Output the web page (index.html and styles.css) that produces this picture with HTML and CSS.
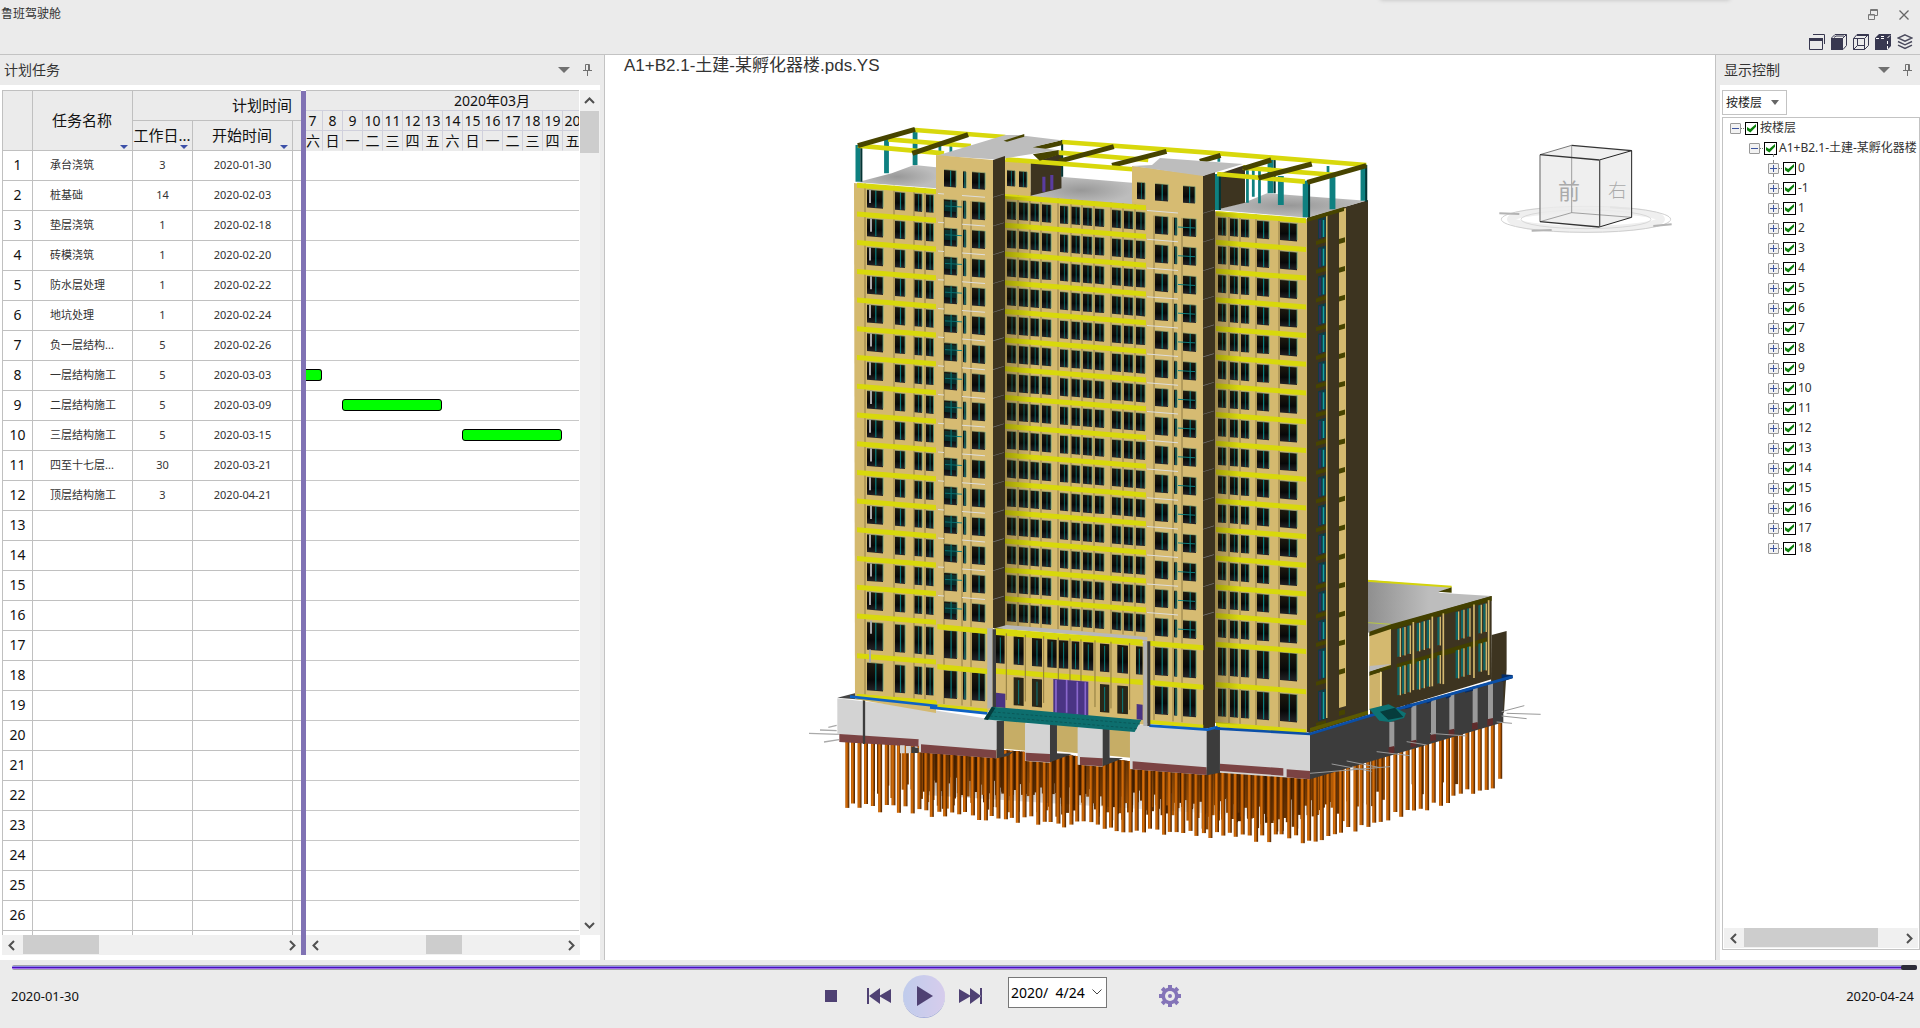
FILE: index.html
```html
<!DOCTYPE html>
<html lang="zh-CN">
<head>
<meta charset="utf-8">
<title>鲁班驾驶舱</title>
<link rel="stylesheet" href="styles.css">
</head>
<body>
<div class="app">
  <header class="topbar">
    <h1 class="app-title">鲁班驾驶舱</h1>
    <div class="topbar-right">
      <div class="window-buttons">
        <button class="icon-btn" aria-label="还原"><svg width="10" height="12" viewBox="0 0 10 12" fill="none" stroke="#777"><path d="M2.500 5V.5h7v6H7M3 1.500h6M.5 5.500h6v5h-6zM1 6h5"/></svg></button>
        <button class="icon-btn" aria-label="关闭"><svg width="10" height="10" viewBox="0 0 10 10" stroke="#666" stroke-width="1.300"><path d="M.5.5l9 9M9.500.5l-9 9"/></svg></button>
      </div>
      <div class="view-buttons">
        <button class="icon-btn" aria-label="窗口"><svg width="16" height="16" viewBox="0 0 16 16" fill="none" stroke="#383850"><path d="M4 .5h11.500V10M.5 4.500h13v11H.5z"/><path d="M0 5.500h14" stroke-width="3"/></svg></button>
        <button class="icon-btn" aria-label="实体"><svg width="16" height="16" viewBox="0 0 16 16" fill="none" stroke="#383850"><path d="M0 4h12v12H0z" fill="#383850" stroke="none"/><path d="M.5 4L4 .5h11.500v11L12 15.500M12 4L15.500.5M3 3.500L5 2h8"/></svg></button>
        <button class="icon-btn" aria-label="线框"><svg width="16" height="16" viewBox="0 0 16 16" fill="none" stroke="#383850"><path d="M.5 4.500h11v11H.5zM.5 4.500L4 .5h11.500v11l-4 4M11.500 4.500l4-4M4 1.500h11M4.500 5v6.500H11M4.500 11.500l-4 4"/></svg></button>
        <button class="icon-btn" aria-label="实体线框"><svg width="16" height="16" viewBox="0 0 16 16"><path d="M0 4L4 0h12v12l-4 4H0z" fill="#383850"/><path d="M1 4.500h3m2 0h3M12.500 7v3m0 2v3M12.500 4L15 1.500M6 2.500h3" fill="none" stroke="#fff"/></svg></button>
        <button class="icon-btn" aria-label="图层"><svg width="16" height="16" viewBox="0 0 16 16" fill="none" stroke="#4a4a5c" stroke-width="1.400"><path d="M8 .8l7 3.200-7 3.200L1 4zM1 7.500l7 3.300 7-3.300M1 11.200l7 3.300 7-3.300"/></svg></button>
      </div>
    </div>
    <div class="drop-shadow"></div>
  </header>

  <main class="workspace">
    <section class="panel">
      <div class="panel-head">
        <h2>计划任务</h2>
        <button class="icon-btn" aria-label="菜单"><svg width="12" height="6" viewBox="0 0 12 6"><path d="M0 0h12L6 6z" fill="#707070"/></svg></button>
        <button class="icon-btn" aria-label="固定"><svg width="9" height="12" viewBox="0 0 9 12" fill="none" stroke="#707070"><path d="M2.500 6V.5h4V6M5.500 1v5M0 6.500h9M4.500 7v5"/></svg></button>
      </div>
      <div class="plan">
        <div class="pane task-pane">
          <div class="pane-view">
            <table class="tasks">
              <colgroup><col class="c-no"><col class="c-name"><col class="c-days"><col class="c-start"><col class="c-end"></colgroup>
              <thead>
                <tr><th rowspan="2"></th><th rowspan="2"><span class="filter">任务名称</span></th><th colspan="3">计划时间</th></tr>
                <tr><th><span class="filter">工作日...</span></th><th><span class="filter">开始时间</span></th><th></th></tr>
              </thead>
              <tbody>
                <tr><th>1</th><td>承台浇筑</td><td>3</td><td>2020-01-30</td><td></td></tr>
                <tr><th>2</th><td>桩基础</td><td>14</td><td>2020-02-03</td><td></td></tr>
                <tr><th>3</th><td>垫层浇筑</td><td>1</td><td>2020-02-18</td><td></td></tr>
                <tr><th>4</th><td>砖模浇筑</td><td>1</td><td>2020-02-20</td><td></td></tr>
                <tr><th>5</th><td>防水层处理</td><td>1</td><td>2020-02-22</td><td></td></tr>
                <tr><th>6</th><td>地坑处理</td><td>1</td><td>2020-02-24</td><td></td></tr>
                <tr><th>7</th><td>负一层结构...</td><td>5</td><td>2020-02-26</td><td></td></tr>
                <tr><th>8</th><td>一层结构施工</td><td>5</td><td>2020-03-03</td><td></td></tr>
                <tr><th>9</th><td>二层结构施工</td><td>5</td><td>2020-03-09</td><td></td></tr>
                <tr><th>10</th><td>三层结构施工</td><td>5</td><td>2020-03-15</td><td></td></tr>
                <tr><th>11</th><td>四至十七层...</td><td>30</td><td>2020-03-21</td><td></td></tr>
                <tr><th>12</th><td>顶层结构施工</td><td>3</td><td>2020-04-21</td><td></td></tr>
                <tr><th>13</th><td></td><td></td><td></td><td></td></tr>
                <tr><th>14</th><td></td><td></td><td></td><td></td></tr>
                <tr><th>15</th><td></td><td></td><td></td><td></td></tr>
                <tr><th>16</th><td></td><td></td><td></td><td></td></tr>
                <tr><th>17</th><td></td><td></td><td></td><td></td></tr>
                <tr><th>18</th><td></td><td></td><td></td><td></td></tr>
                <tr><th>19</th><td></td><td></td><td></td><td></td></tr>
                <tr><th>20</th><td></td><td></td><td></td><td></td></tr>
                <tr><th>21</th><td></td><td></td><td></td><td></td></tr>
                <tr><th>22</th><td></td><td></td><td></td><td></td></tr>
                <tr><th>23</th><td></td><td></td><td></td><td></td></tr>
                <tr><th>24</th><td></td><td></td><td></td><td></td></tr>
                <tr><th>25</th><td></td><td></td><td></td><td></td></tr>
                <tr><th>26</th><td></td><td></td><td></td><td></td></tr>
                <tr><th></th><td></td><td></td><td></td><td></td></tr>
              </tbody>
            </table>
          </div>
          <div class="hscroll">
            <button aria-label="向左"><svg width="7" height="11" viewBox="0 0 7 11"><path d="M6 1L1.500 5.500 6 10"/></svg></button>
            <div class="rail"><div class="thumb" style="margin-left:1%;width:29%"></div></div>
            <button aria-label="向右"><svg width="7" height="11" viewBox="0 0 7 11"><path d="M1 1l4.500 4.500L1 10"/></svg></button>
          </div>
        </div>
        <div class="splitter"></div>
        <div class="pane gantt-pane">
          <div class="pane-view">
            <table class="gantt">
              <colgroup><col class="d-first"><col span="13" class="d"></colgroup>
              <thead>
                <tr><th colspan="14" class="month">2020年03月</th></tr>
                <tr><th>7</th><th>8</th><th>9</th><th>10</th><th>11</th><th>12</th><th>13</th><th>14</th><th>15</th><th>16</th><th>17</th><th>18</th><th>19</th><th>20</th></tr>
                <tr><th>六</th><th>日</th><th>一</th><th>二</th><th>三</th><th>四</th><th>五</th><th>六</th><th>日</th><th>一</th><th>二</th><th>三</th><th>四</th><th>五</th></tr>
              </thead>
              <tbody>
                <tr><td colspan="14"></td></tr><tr><td colspan="14"></td></tr><tr><td colspan="14"></td></tr><tr><td colspan="14"></td></tr>
                <tr><td colspan="14"></td></tr><tr><td colspan="14"></td></tr><tr><td colspan="14"></td></tr>
                <tr><td colspan="14"><div class="bar cut" style="width:16px"></div></td></tr>
                <tr><td colspan="14"><div class="bar" style="margin-left:36px;width:100px"></div></td></tr>
                <tr><td colspan="14"><div class="bar" style="margin-left:156px;width:100px"></div></td></tr>
                <tr><td colspan="14"></td></tr><tr><td colspan="14"></td></tr><tr><td colspan="14"></td></tr><tr><td colspan="14"></td></tr>
                <tr><td colspan="14"></td></tr><tr><td colspan="14"></td></tr><tr><td colspan="14"></td></tr><tr><td colspan="14"></td></tr>
                <tr><td colspan="14"></td></tr><tr><td colspan="14"></td></tr><tr><td colspan="14"></td></tr><tr><td colspan="14"></td></tr>
                <tr><td colspan="14"></td></tr><tr><td colspan="14"></td></tr><tr><td colspan="14"></td></tr><tr><td colspan="14"></td></tr>
              </tbody>
            </table>
          </div>
          <div class="hscroll">
            <button aria-label="向左"><svg width="7" height="11" viewBox="0 0 7 11"><path d="M6 1L1.500 5.500 6 10"/></svg></button>
            <div class="rail"><div class="thumb" style="margin-left:43%;width:15%"></div></div>
            <button aria-label="向右"><svg width="7" height="11" viewBox="0 0 7 11"><path d="M1 1l4.500 4.500L1 10"/></svg></button>
          </div>
        </div>
        <div class="vscroll">
          <button aria-label="向上"><svg width="11" height="7" viewBox="0 0 11 7"><path d="M1 6l4.500-4.500L10 6"/></svg></button>
          <div class="rail"><div class="thumb"></div></div>
          <button aria-label="向下"><svg width="11" height="7" viewBox="0 0 11 7"><path d="M1 1l4.500 4.500L10 1"/></svg></button>
        </div>
      </div>
    </section>

    <section class="viewport">
      <div class="model-name">A1+B2.1-土建-某孵化器楼.pds.YS</div>
      <svg class="model" viewBox="605 55 1110 905" role="img" aria-label="建筑模型">
        <defs>
          <linearGradient id="shade" x1="0" x2="1"><stop offset="0" stop-color="#2a2000" stop-opacity=".32"/><stop offset="1" stop-color="#2a2000" stop-opacity="0"/></linearGradient>
          <linearGradient id="glass" x1="0" x2="0" y1="0" y2="1"><stop offset="0" stop-color="#1f1b10"/><stop offset=".6" stop-color="#080808"/><stop offset="1" stop-color="#26262a"/></linearGradient>
          <linearGradient id="pile"><stop offset="0" stop-color="#b85a04"/><stop offset=".4" stop-color="#d8700a"/><stop offset=".7" stop-color="#8a4202"/><stop offset="1" stop-color="#3a1a00"/></linearGradient>
          <linearGradient id="dark" x2="0" y2="1"><stop offset="0" stop-color="#1c0c00" stop-opacity=".6"/><stop offset="1" stop-color="#1c0c00" stop-opacity="0"/></linearGradient>
          <radialGradient id="roof"><stop offset="0" stop-color="#989898"/><stop offset="1" stop-color="#bdbdbd"/></radialGradient>
          <linearGradient id="annexroof"><stop offset="0" stop-color="#8e8e8e"/><stop offset=".5" stop-color="#bdbdbd"/></linearGradient>
        </defs>

        <g id="piles"></g>

        <!-- podium annex on the right -->
        <g transform="translate(1200 560) scale(.3333)">
          <path d="M500 60l255 20-40 18 160 10-302 87-73 25z" fill="url(#annexroof)"/>
          <path d="M500 62l255 18" stroke="#d4d40c" stroke-width="6"/><path d="M755 82v16l-40-3z" fill="#434000"/>
          <path d="M505 188l68 5" stroke="#b8c840" stroke-width="3"/>
          <path d="M875 225l45-12v115l-8 130h-40z" fill="#3d3420"/>
          <path d="M573 195l302-87v250l-365 110V222z" fill="#3d3420"/>
          <path d="M508 225l65-25v118l-65 15z" fill="#d4b96f"/><path d="M508 215l65-22v14l-65 22z" fill="#434000"/>
          <path d="M508 318l65-6-65 25z" fill="#bbb"/><path d="M508 345l38-10v104l-38 12z" fill="#cdb26a"/><path d="M508 335l65-20v10l-65 22z" fill="#434000"/><path d="M542 335v105" stroke="#eedb9c" stroke-width="4"/>
          <path d="M573 193l302-85v14l-302 88zM590 312l272-80v18l-272 78z" fill="#434000"/>
          <g id="annex"></g>
        </g>

        <!-- basement walls -->
        <g transform="translate(800 600) scale(.3333)">
          <path d="M27 400l90 3M60 390l50 2M85 382l25-6M72 426l45-7" stroke="#aaa" stroke-width="4" fill="none"/>
          <path d="M112 293l55-14 80 10-60 10z" fill="#444"/>
          <path d="M112 295l245 28v98l-245-18z" fill="#d3d3d3"/>
          <path d="M118 402l238 16v22l-238-14z" fill="#7b4343"/>
          <path d="M192 298v134" stroke="#3c3c3c" stroke-width="7"/>
          <path d="M300 436h14v24h-14zM318 438h14v22h-14z" fill="#d3d3d3"/><path d="M334 440l22 4v15h-22z" fill="#3c3c3c"/>
          <path d="M357 323l233 38v114l-233-18z" fill="#d3d3d3"/>
          <path d="M357 323l38-12 22 8-25 8z" fill="#444"/>
          <path d="M363 433l225 18v24l-225-17z" fill="#7b4343"/>
          <path d="M590 362h22v100l30-8-18 14-34 7z" fill="#3c3c3c"/>
          <path d="M612 362h65v90l-65-6zM771 375h63v85l-63-6zM929 385h63v88l-63-6z" fill="#c6ad66"/>
          <path d="M675 370h75v118l-75-5z" fill="#d3d3d3"/><path d="M677 458l73 4v25l-73-5z" fill="#7b4343"/><path d="M750 372h21v88l45 2-66 25z" fill="#3c3c3c"/>
          <path d="M833 382h75v118l-75-6z" fill="#d3d3d3"/><path d="M840 471l68 4v24l-68-4z" fill="#7b4343"/><path d="M908 385h21v88l40 2-61 24z" fill="#3c3c3c"/>
          <path d="M990 372l230 16v137l-230-18z" fill="#d3d3d3"/><path d="M998 484l222 18v23l-222-17z" fill="#7b4343"/>
          <path d="M1220 390l40-12v140l-40 8z" fill="#3c3c3c"/>
        </g>
        <g transform="translate(1200 560) scale(.3333)">
          <path d="M60 505l270 16v137l-270-20z" fill="#d3d3d3"/><path d="M60 611l190 14v22l-190-14zM260 628l70 5v25l-70-6z" fill="#7b4343"/>
          <path d="M330 522l180-55 400-112v132l-580 171z" fill="#3c3c3c"/>
          <g id="buttress"></g>
          <path d="M905 343l33 2v10l-33 10zM615 435l22-5v12l-22 6zM680 420l14-4v10l-14 5zM738 405l14-4v10l-14 5zM795 388l24-6v10l-24 6z" fill="#062c66"/>
          <path d="M905 455l68-18M920 460l102 3M905 468l75 8M890 486l46 4M330 640l240-20M440 603l100 20M395 612l120 22M530 575l100 12M690 520l110 8M620 545l60 10" stroke="#999" stroke-width="3" fill="none"/>
        </g>

        <!-- wall masses -->
        <path d="M854 183l82 9v521l-81-14z" fill="#d4b96f"/>
        <path d="M1004 190l143 12v440l-143-15z" fill="#d4b96f"/>
        <path d="M990 629l157 14v82l-157-16z" fill="#d4b96f"/>
        <path d="M1215 211l92 8v514l-92-10z" fill="#d4b96f"/>
        <path d="M1307 218l61-18v515l-58 18-3-1z" fill="#3d3420"/>
        <g transform="translate(840 110) scale(.3444 .3333)">
          <path d="M50 217l100-27 65-25 65 7v63z" fill="url(#roof)"/>
          <path d="M553 258l87-58 208 18v64z" fill="url(#roof)"/>
          <path d="M1090 300l90-25 60-25 288 22-171 51z" fill="url(#roof)"/>
          <path d="M553 160l90-30v105l-90 22z" fill="#3d3420"/><path d="M478 150l75 10v97l-75-7z" fill="#d4b96f"/>
          <path d="M592 200v45M615 195v44" stroke="#5a3ca0" stroke-width="9"/>
          <path d="M1090 195l86-30v113l-86 22z" fill="#3d3420"/>
          <g fill="none" stroke="#0e8080" stroke-width="14">
            <path d="M52 105v110M135 85v105M218 55v110"/><path d="M1095 192v108M1352 212v110M1430 188v110M1520 162v110M1280 198v87M1250 140v110" stroke-width="17"/>
            <path d="M290 95v40M322 108v22M1183 180v98M1200 180v80M1218 175v105M1417 168v30M1100 125v30" stroke-width="8"/>
            <path d="M645 90v110M62 110v105M1262 145v105M1362 215v108M1528 165v110M1103 195v105" stroke="#043434" stroke-width="6"/>
          </g>
          <g fill="none" stroke="#d8d80c" stroke-width="14">
            <path d="M218 60l262 21M140 88l240 20M52 107l250 23M645 96l455 34 428 35M635 128l260 22M1170 173l270 22M1095 192l255 23"/>
          </g>
          <g fill="none" stroke="#474400" stroke-width="15">
            <path d="M218 58L52 107M372 74L210 130M645 98l-85 20M795 110l-160 44M948 124l-158 42M1105 136l-60 18M1252 150l-82 26M1370 162l-155 42M1528 167l-171 50"/>
          </g>
          <path d="M480 148l435 35" stroke="#d8d80c" stroke-width="14"/>
          <path d="M280 137L480 75h55l-60 20 60-18 108 14-83 21 70 8-150 25-35 3z" fill="#bdbdbd"/><path d="M475 92l60-20v8l-50 15z" fill="#474400"/>
          <path d="M560 133l75-13v14l-55 18z" fill="#474400"/>
        </g>
        <path d="M936 155l57 5v546l-6 7-51-4z" fill="#d6bb72"/>
        <path d="M993 160l12-4v475l-12-3z" fill="#3d3420"/>
        <path d="M1132 166l71 9v553l-56-5V204l-15-2z" fill="#d6bb72"/>
        <path d="M1203 176l12-5v556l-12 2z" fill="#3d3420"/>
        <path d="M1132 166l20-1 8-7 83 6-40 12z" fill="#bdbdbd"/>
        <g id="facade"></g>
        <path d="M1005 196l28 2v432l-28-3z" fill="url(#shade)"/>
        <path d="M1215 212l24 2v511l-24-2z" fill="url(#shade)"/>

        <!-- entrance -->
        <g transform="translate(800 600) scale(.3333)">
          <path d="M585 85l35-10 422 36v10z" fill="#b8b8b8"/>
          <path d="M585 85l443 34v18L585 105zM585 205l443 34v16L585 221z" fill="#d8d80c"/>
          <path d="M412 72l150 14v16l-150-14zM412 192l150 14v16l-150-14zM412 312l150 14v14l-150-14zM1050 122l160 14v15l-160-14zM1050 240l160 14v15l-160-14zM1050 360l160 14v12l-160-14zM176 282l235 22v10l-235-22z" fill="#d8d80c"/>
          <path d="M150 290l262 28M390 322l172 18M1048 377l175 12 30-8" stroke="#0d62c4" stroke-width="8" fill="none"/>
          <g id="entry"></g>
          <path d="M760 237l105 8v102l-105-9zM588 278l28 3v43l-28-3zM1010 312l18 2v46l-18-2z" fill="#4a3484"/>
          <path d="M768 240v98M800 240v98M832 245v98M856 247v98" stroke="#8a68cc" stroke-width="5"/>
          <path d="M562 85h16v240h-16zM1030 122h12v256h-12z" fill="#b4b4b4"/><path d="M578 88h10v240h-10zM1042 124h9v254h-9z" fill="#3c3c3c"/>
          <path d="M552 358l24-38 448 40-20 36z" fill="#0d6e6e"/>
          <path d="M570 348l440 38M580 336l440 36" stroke="#0a5858" stroke-width="3" stroke-dasharray="8 6"/><path d="M552 358l24-38 10 4-22 36z" fill="#053c3c"/>
        </g>
        <g transform="translate(1200 560) scale(.3333)">
          <path d="M45 505l285 17 180-55 110-27 318-90" stroke="#0a4fa8" stroke-width="8" fill="none"/>
          <path d="M508 447l58-14 52 27-6 14-42 12-32-4z" fill="#0d7272"/><path d="M540 455l45-12 25 28-45 8z" fill="#063c3c"/>
        </g>

        <!-- orientation cube -->
        <g transform="translate(1480 130) scale(.3333)" fill="none">
          <ellipse cx="318" cy="268" rx="226" ry="30" stroke="#efefef" stroke-width="22"/>
          <ellipse cx="318" cy="268" rx="254" ry="39" stroke="#cfcfcf" stroke-width="3"/><ellipse cx="318" cy="268" rx="195" ry="28" stroke="#d8d8d8" stroke-width="3"/>
          <path d="M58 250l60 2M155 302l60-2M520 288l55-5M390 232l60 4" stroke="#b4b4b4" stroke-width="6"/>
          <path d="M180 74l95-28 180 16v200l-95 29-180-16z" fill="#ececec" fill-opacity=".85"/>
          <path d="M275 46v202l-95 27M275 248l180 14" stroke="#777" stroke-width="2"/>
          <path d="M180 74v201" stroke="#888" stroke-width="4"/><path d="M180 74l95-28" stroke="#777" stroke-width="3"/>
          <path d="M275 46l180 16M180 74l178 16M180 275l178 16" stroke="#333" stroke-width="4"/>
          <path d="M358 90l97-28v200l-97 29" stroke="#222" stroke-width="3"/><path d="M359 90v201" stroke="#555" stroke-width="4"/>
          <text x="234" y="208" class="cube-text">前</text><text x="384" y="202" class="cube-text side">右</text>
        </g>
      </svg>
    </section>

    <section class="panel side-panel">
      <div class="panel-head">
        <h2>显示控制</h2>
        <button class="icon-btn" aria-label="菜单"><svg width="12" height="6" viewBox="0 0 12 6"><path d="M0 0h12L6 6z" fill="#707070"/></svg></button>
        <button class="icon-btn" aria-label="固定"><svg width="9" height="12" viewBox="0 0 9 12" fill="none" stroke="#707070"><path d="M2.500 6V.5h4V6M5.500 1v5M0 6.500h9M4.500 7v5"/></svg></button>
      </div>
      <div class="side-body">
        <div class="select-wrap">
          <select class="group-select" aria-label="分组方式"><option>按楼层</option></select>
          <svg width="8" height="5" viewBox="0 0 8 5"><path d="M0 0h8L4 5z" fill="#666"/></svg>
        </div>
        <div class="tree-box">
          <ul class="tree">
            <li><div class="node"><button class="tog open" aria-label="折叠"></button><label><input type="checkbox" checked>按楼层</label></div>
              <ul>
                <li><div class="node"><button class="tog open" aria-label="折叠"></button><label><input type="checkbox" checked>A1+B2.1-土建-某孵化器楼</label></div>
                  <ul class="floors">
                    <li class="node"><button class="tog" aria-label="展开"></button><label><input type="checkbox" checked>0</label></li>
                    <li class="node"><button class="tog" aria-label="展开"></button><label><input type="checkbox" checked>-1</label></li>
                    <li class="node"><button class="tog" aria-label="展开"></button><label><input type="checkbox" checked>1</label></li>
                    <li class="node"><button class="tog" aria-label="展开"></button><label><input type="checkbox" checked>2</label></li>
                    <li class="node"><button class="tog" aria-label="展开"></button><label><input type="checkbox" checked>3</label></li>
                    <li class="node"><button class="tog" aria-label="展开"></button><label><input type="checkbox" checked>4</label></li>
                    <li class="node"><button class="tog" aria-label="展开"></button><label><input type="checkbox" checked>5</label></li>
                    <li class="node"><button class="tog" aria-label="展开"></button><label><input type="checkbox" checked>6</label></li>
                    <li class="node"><button class="tog" aria-label="展开"></button><label><input type="checkbox" checked>7</label></li>
                    <li class="node"><button class="tog" aria-label="展开"></button><label><input type="checkbox" checked>8</label></li>
                    <li class="node"><button class="tog" aria-label="展开"></button><label><input type="checkbox" checked>9</label></li>
                    <li class="node"><button class="tog" aria-label="展开"></button><label><input type="checkbox" checked>10</label></li>
                    <li class="node"><button class="tog" aria-label="展开"></button><label><input type="checkbox" checked>11</label></li>
                    <li class="node"><button class="tog" aria-label="展开"></button><label><input type="checkbox" checked>12</label></li>
                    <li class="node"><button class="tog" aria-label="展开"></button><label><input type="checkbox" checked>13</label></li>
                    <li class="node"><button class="tog" aria-label="展开"></button><label><input type="checkbox" checked>14</label></li>
                    <li class="node"><button class="tog" aria-label="展开"></button><label><input type="checkbox" checked>15</label></li>
                    <li class="node"><button class="tog" aria-label="展开"></button><label><input type="checkbox" checked>16</label></li>
                    <li class="node"><button class="tog" aria-label="展开"></button><label><input type="checkbox" checked>17</label></li>
                    <li class="node"><button class="tog" aria-label="展开"></button><label><input type="checkbox" checked>18</label></li>
                  </ul>
                </li>
              </ul>
            </li>
          </ul>
          <div class="hscroll">
            <button aria-label="向左"><svg width="7" height="11" viewBox="0 0 7 11"><path d="M6 1L1.500 5.500 6 10"/></svg></button>
            <div class="rail"><div class="thumb" style="margin-left:1%;width:85%"></div></div>
            <button aria-label="向右"><svg width="7" height="11" viewBox="0 0 7 11"><path d="M1 1l4.500 4.500L1 10"/></svg></button>
          </div>
        </div>
      </div>
    </section>
  </main>

  <footer class="player">
    <input class="timeline" type="range" min="0" max="85" value="85" aria-label="时间轴">
    <div class="player-row">
      <span>2020-01-30</span>
      <div class="controls">
        <button class="icon-btn stop" aria-label="停止"><svg width="12" height="12"><path d="M0 0h12v12H0z" fill="#4f4173"/></svg></button>
        <button class="icon-btn prev" aria-label="后退"><svg width="24" height="16" viewBox="0 0 24 16" fill="#4f4173"><path d="M0 0h2v16H0zM13 0v16L2 8zM24 1v14L12 8z"/></svg></button>
        <button class="play" aria-label="播放"><svg width="16" height="20" viewBox="0 0 16 20"><path d="M0 0l16 10L0 20z" fill="#4f4173"/></svg></button>
        <button class="icon-btn next" aria-label="前进"><svg width="24" height="16" viewBox="0 0 24 16" fill="#4f4173"><path d="M0 1v14l12-7zM11 0v16l11-8zM21 0h2v16h-2z"/></svg></button>
        <div class="date-wrap"><input class="date" type="text" value="2020/  4/24" aria-label="当前日期"><svg width="10" height="6" viewBox="0 0 10 6" fill="none" stroke="#444"><path d="M.5.5L5 5 9.500.5"/></svg></div>
        <button class="icon-btn" aria-label="设置"><svg width="22" height="22" viewBox="-11 -11 22 22"><g fill="#8474b8"><circle r="8.500"/><path d="M-2-11h4v22h-4zM-11-2h22v4h-22z"/><path d="M-2-11h4v22h-4zM-11-2h22v4h-22z" transform="rotate(45)"/></g><circle r="5" fill="#ebebeb"/><circle r="2" fill="#8474b8"/></svg></button>
      </div>
      <span class="end-date">2020-04-24</span>
    </div>
  </footer>
</div>
<script src="model.js"></script>
</body>
</html>
```

FILE: styles.css
```css
* { box-sizing: border-box; }
body { margin: 0; background: #ebebeb; color: #222; font: 12px/16px "Noto Sans", "Noto Sans CJK SC", sans-serif; }
h1, h2 { margin: 0; font-weight: 400; color: #333; }
button { padding: 0; border: 0; background: none; font: inherit; }
svg { display: block; }
ul { list-style: none; margin: 0; padding: 0; }
.icon-btn { display: flex; align-items: center; justify-content: center; }

.app { height: 100vh; min-height: 480px; display: grid; grid-template-rows: 54px minmax(0, 1fr) 68px; }

.topbar { position: relative; display: flex; justify-content: space-between; }
.app-title { font-size: 12px; line-height: 28px; padding-left: 1px; }
.topbar-right { display: flex; flex-direction: column; align-items: flex-end; gap: 13px; padding: 9px 7px 0 0; }
.window-buttons { display: flex; align-items: center; gap: 21px; height: 12px; padding-right: 4px; }
.view-buttons { display: flex; gap: 6px; }
.drop-shadow { position: absolute; top: -4px; right: 190px; width: 350px; height: 4px; border-radius: 4px; box-shadow: 0 0 4px #bbb; }

.workspace { display: grid; grid-template-columns: 600px minmax(0, 1fr) 200px; gap: 4px; min-height: 0; border-top: 1px solid #c3c3c3; }
.panel { display: flex; flex-direction: column; min-width: 0; min-height: 0; }
.panel-head { display: flex; align-items: center; height: 30px; flex: none; padding-right: 8px; }
.panel-head h2 { flex: 1; font-size: 14px; padding-left: 4px; }
.panel-head .icon-btn + .icon-btn { margin-left: 13px; }

.plan { flex: 1; min-height: 0; display: grid; grid-template-columns: 299px 5px minmax(0, 1fr) 20px; padding: 5px 0 5px 2px; background: #fff; }
.pane { display: flex; flex-direction: column; min-width: 0; min-height: 0; }
.pane-view { flex: 1; min-height: 0; overflow: hidden; }
.splitter { background: #8072b4; margin-top: 1px; }

table { table-layout: fixed; border-collapse: separate; border-spacing: 0; }
th, td { padding: 0; font-weight: 400; overflow: hidden; white-space: nowrap; }
thead th { background: #ebebeb; color: #111; }
.tasks { width: 391px; border-top: 1px solid #c0c0c0; border-left: 1px solid #c0c0c0; }
.c-no { width: 30px; } .c-name { width: 100px; } .c-days { width: 60px; } .c-start { width: 100px; } .c-end { width: 100px; }
.tasks th, .tasks td { height: 30px; border-right: 1px solid #c0c0c0; border-bottom: 1px solid #c0c0c0; text-align: center; padding-bottom: 1px; }
.tasks thead th { font-size: 15px; line-height: 20px; padding-bottom: 2px; padding-right: 1px; }
.tasks tbody th { font-size: 14px; color: #111; }
.tasks tbody td { font-size: 11px; color: #333; }
.tasks td:nth-child(2) { text-align: left; padding-left: 17px; }
.filter { display: block; position: relative; }
.filter::after { content: ""; position: absolute; right: 3px; bottom: -4px; border: 4px solid transparent; border-top-color: #3c50a8; border-bottom: 0; }
th[rowspan] .filter::after { bottom: -19px; }

.gantt { width: 277px; border-top: 1px solid #c0c0c0; }
.d-first { width: 17px; } .d { width: 20px; }
.gantt-pane .pane-view { margin-right: 1px; }
.gantt th { height: 20px; font-size: 14px; line-height: 18px; text-align: center; border-bottom: 1px solid #d0d0dc; border-right: 1px solid #d0d0dc; }
.gantt th:first-child { padding-right: 3px; }
.gantt .month { padding-left: 99px; }
.gantt thead tr:last-child th { border-bottom-color: #ebebeb; }
.gantt td { height: 30px; padding-bottom: 1px; border-bottom: 1px solid #c8c8c8; }
.bar { height: 12px; background: #0f0; border: 1px solid #000; border-radius: 3px; }
.bar.cut { border-left: 0; border-radius: 0 3px 3px 0; }

.hscroll { display: flex; align-items: center; height: 20px; flex: none; background: #f0f0f0; }
.hscroll button, .vscroll button { width: 18px; height: 20px; display: flex; align-items: center; justify-content: center; }
.hscroll svg, .vscroll svg { fill: none; stroke: #505050; stroke-width: 2; }
.rail { flex: 1; align-self: stretch; }
.thumb { height: 19px; background: #cdcdcd; }
.vscroll { display: flex; flex-direction: column; align-items: flex-start; background: #f0f0f0; margin-bottom: 20px; }
.vscroll .rail { width: 19px; }
.vscroll .thumb { height: 42px; margin-top: 1px; }

.viewport { position: relative; min-width: 0; min-height: 0; background: #fff; border-left: 1px solid #c3c3c3; border-right: 1px solid #c3c3c3; }
.model { width: 100%; height: 100%; }
.model-name { position: absolute; left: 19px; top: 1px; font: 17px/20px "Liberation Sans", "Noto Sans CJK SC", sans-serif; color: #333; }
.cube-text { font: 66px "Noto Sans CJK SC", sans-serif; fill: #aaa; }
.cube-text.side { font-size: 56px; font-weight: 300; }

.side-body { flex: 1; min-height: 0; display: flex; flex-direction: column; align-items: flex-start; gap: 2px; padding: 5px 0 10px 2px; background: #fff; }
.select-wrap { position: relative; }
.select-wrap svg { position: absolute; right: 8px; top: 10px; pointer-events: none; }
.group-select { appearance: none; width: 65px; height: 25px; padding: 0 3px; border: 1px solid #c3c3c3; border-radius: 0; background: #fff; font: inherit; color: #222; }
.tree-box { flex: 1; width: 100%; min-height: 0; display: flex; flex-direction: column; border: 1px solid #c3c3c3; padding: 0 1px 1px; }
.tree { flex: 1; min-height: 0; overflow: hidden; padding-left: 6px; color: #333; }
.tree ul { padding-left: 19px; }
.node { position: relative; display: flex; align-items: center; height: 20px; white-space: nowrap; }
.node::before { content: ""; position: absolute; left: 11px; width: 5px; border-top: 1px dotted #777; }
.floors .node::after { content: ""; position: absolute; left: 5px; top: -4px; height: 9px; border-left: 1px dashed #888; }
.tog { width: 11px; height: 11px; flex: none; margin-right: 4px; border: 1px solid #999; border-radius: 1px; background: linear-gradient(#3d55a0, #3d55a0) center / 7px 1px no-repeat, linear-gradient(#3d55a0, #3d55a0) center / 1px 7px no-repeat, #f2f2f2; }
.tog.open { background: linear-gradient(#3d55a0, #3d55a0) center / 7px 1px no-repeat, #f2f2f2; }
.node label { display: flex; align-items: center; gap: 2px; }
.node input { appearance: none; position: relative; width: 13px; height: 13px; flex: none; margin: 0; border: 1px solid #000; background: #fff; }
.node input:checked::after { content: ""; position: absolute; inset: 1px; background: #0a800a; clip-path: polygon(0 40%, 35% 62%, 100% 5%, 100% 36%, 38% 100%, 0 74%); }

.player { display: flex; flex-direction: column; }
.timeline { appearance: none; width: auto; height: 5px; margin: 5px 3px 0 12px; border-radius: 2px; background: linear-gradient(#a0a0a8 0 1px, #8c84ea 1px 2px, #4a10b8 2px 3px, #a068f0 3px 4px, #a0a0a8 4px 5px); }
.timeline::-webkit-slider-thumb { appearance: none; width: 16px; height: 5px; border-radius: 2px; background: #2c2c38; }
.player-row { display: grid; grid-template-columns: 1fr auto 1fr; align-items: center; height: 52px; padding: 0 6px 0 11px; font-size: 13px; }
.player-row > span { color: #111; }
.end-date { text-align: right; }
.controls { display: flex; align-items: center; padding-left: 81px; }
.prev { margin-left: 30px; }
.play { width: 42px; height: 42px; margin: 0 14px 0 12px; border-radius: 50%; background: linear-gradient(90deg, #c0ccec, #d6ccec); box-shadow: 0 1px 0 #a8b0dc; display: flex; align-items: center; justify-content: center; padding-left: 2px; }
.date-wrap { position: relative; margin: 0 52px 7px 25px; }
.date-wrap svg { position: absolute; right: 5px; top: 12px; }
.date { display: block; width: 99px; height: 31px; padding: 0 2px; border: 1px solid #777; border-radius: 0; background: #fff; font: 14px/20px "Noto Sans", sans-serif; color: #000; }
```

FILE: model.js
```js
// Draws the repeating parts of the building: floor bands, windows and piles.
const rand = (() => { let s = 7; return () => (s = (s * 16807) % 2147483647) / 2147483647; })();
const poly = (pts, fill) => `<polygon points="${pts.map(p => p[0].toFixed(1) + ',' + p[1].toFixed(1)).join(' ')}" fill="${fill}"/>`;
const slab = (x0, x1, y, k, h, fill) => poly([[x0, y], [x1, y + k * (x1 - x0)], [x1, y + k * (x1 - x0) + h], [x0, y + h]], fill);
const line = (x, y0, y1, c, w) => `<path d="M${x.toFixed(1)} ${y0.toFixed(1)}V${y1.toFixed(1)}" stroke="${c}" stroke-width="${w}"/>`;
const STEP = 28.72, K = 0.08;

function pane(x0, x1, y, h) {
  const w = x1 - x0, m = x0 + w * 0.55;
  return slab(x0, x1, y, K, h, 'url(#glass)') +
    line(m, y + 1, y + h, '#0b7c7c', w > 9 ? 1.2 : 0.8) +
    line(x1, y + 1, y + h, '#4f9a84', 0.8) +
    `<path d="M${x0} ${y}l${w} ${w * K}" stroke="#a9b27a" stroke-width=".7"/>`;
}
function wing(o) {
  let s = '';
  o.seams.forEach(x => { s += line(x, o.y + K * (x - o.x0), o.bottom + K * (x - o.x0), '#8a7642', 0.9); });
  const rows = [];
  for (let n = 0; n < 15; n++) rows.push([o.y + n * STEP + o.off, 18]);
  (o.low || []).forEach(y => rows.push([y, 28]));
  rows.forEach(([y, h]) => o.win.forEach(([a, b]) => { s += pane(a, b, y + K * (a - o.x0), h); }));
  (o.bands || []).forEach(y => { s += slab(o.x0, o.x1, y, K, 5, '#d8d80c'); });
  return s;
}
const bands = (y, n) => Array.from({ length: n }, (_, i) => y + i * STEP);

let f = '';
f += wing({ x0: 857, x1: 936, y: 182.7, off: 6, bottom: 694, seams: [865, 894, 914, 925],
  win: [[867, 883], [895, 905], [914.5, 922], [926, 933.5]], low: [621, 661.5], bands: [...bands(182.7, 16), 653.3, 694] });
for (let n = 0; n < 17; n++) f += line(870 + (n % 2), 190 + n * STEP, 203 + n * STEP, '#a9a9a9', 2);
f += wing({ x0: 1005, x1: 1146, y: 194, off: 7, bottom: 625, seams: [1018, 1030, 1041, 1058, 1071, 1082, 1094, 1111, 1123, 1135],
  win: [[1007, 1016], [1019, 1028], [1030.5, 1039], [1042, 1051], [1060, 1068], [1071.5, 1080], [1083, 1092], [1095, 1104], [1112, 1121], [1124, 1133], [1136, 1145]],
  bands: bands(194, 15) });
f += wing({ x0: 1216, x1: 1306, y: 211, off: 6, bottom: 722, seams: [1229, 1240, 1256, 1279],
  win: [[1218, 1226], [1230, 1238], [1241, 1249], [1257, 1269], [1280, 1297]], low: [647, 688], bands: [...bands(211, 16), 682, 722] });

// stair towers
f += wing({ x0: 944, x1: 993, y: 199, off: 0, bottom: 704, seams: [944, 962, 971],
  win: [[944, 957], [963, 966], [972, 985]], low: [630, 670] });
f += wing({ x0: 1155, x1: 1203, y: 215.7, off: 0, bottom: 720, seams: [1154, 1173, 1182],
  win: [[1155, 1168], [1174, 1177], [1183, 1196]], low: [647, 686] });
[[944, 956], [963, 966], [972, 985]].forEach(([a, b]) => { f += pane(a, b, 169.5 + K * (a - 944), 17); });
[[1137, 1145], [1155, 1168], [1183, 1195]].forEach(([a, b]) => { f += pane(a, b, 182 + K * (a - 1137), 17); });
[[1007, 1015], [1019, 1027]].forEach(([a, b]) => { f += pane(a, b, 170 + K * (a - 1007), 16); });
for (let n = 0; n < 15; n++) {
  const y = 193 + n * STEP;
  f += slab(938, 944, y, K, 1, '#ddd') + slab(962, 985, y + 2, K, 1, '#ddd');
  f += slab(1147, 1178, y + 17, K, 1, '#ddd');
  f += `<path d="M945 ${y + 13}l17 1M1178 ${y + 34}l17 1" stroke="#0b7c7c"/>`;
  f += slab(944.5, 956, y + 8, K, 10, 'rgba(0,90,90,.45)');
  f += slab(993, 1004, y + 4, -0.3, 0.6, '#777') + slab(1203, 1214, y + 20, -0.3, 0.6, '#777');
}

// right-hand end wall
f += `<path d="M1339 210l7-2v498l-7 2z" fill="#d4b96f"/><path d="M1326 213h1.500v505h-1.500z" fill="#d4b96f"/>`;
for (let n = 0; n < 17; n++) {
  const y = 219 + (n < 16 ? n * STEP : 472), h = n > 14 ? 30 : 20;
  f += slab(1318, 1326, y, -0.28, h, '#123c44') + line(1323.5, y + 1, y + h - 2, '#13a0a0', 1.500) + line(1320, y + 1, y + h - 1, '#3a2c66', 1.500);
  f += slab(1316, 1326, y + h + 2, -0.28, 4, '#474400') + slab(1339, 1345, y + 20, -0.28, 5, '#474400');
}
f += slab(1307, 1344, 218, -0.3, 4, '#474400') + slab(1310, 1368, 728, -0.3, 4, '#5c5a00');
document.getElementById('facade').innerHTML = f;

let e = '';
[[588, 614], [641, 671], [696, 726], [742, 770], [777, 805], [815, 838], [850, 880], [900, 928], [952, 984], [1008, 1028]].forEach(([a, b]) => {
  e += slab(a, b, 105 + K * (a - 585), K, 84, 'url(#glass)') + line((a + b) / 2, 112 + K * (a - 585), 188 + K * (a - 585), '#0b7c7c', 3) + line(b + 5, 100 + K * (a - 585), 300 + K * (a - 585), '#8d793f', 3);
});
[[641, 671], [696, 726], [900, 928], [952, 984]].forEach(([a, b]) => {
  e += slab(a, b, 227 + K * (a - 585), K, 84, '#2a2718') + line((a + b) / 2, 236 + K * (a - 585), 308 + K * (a - 585), '#0b7c7c', 3);
});
document.getElementById('entry').innerHTML = e;

let x = '';
[592, 606, 622, 650, 664, 680, 712, 767, 783, 801, 835, 850].forEach(a => {
  [[207, 84], [322, 84]].forEach(([y, h]) => {
    const t = y - 0.29 * (a - 592);
    x += slab(a, a + 7, t, -0.29, h, '#0e6666') + line(a + 9, t - 2, t + h, '#d4b96f', 4);
  });
});
[640, 697, 730, 822, 866].forEach(a => { x += line(a, 200 - 0.29 * (a - 592), 400 - 0.2 * (a - 592), '#d4b96f', 5); });
document.getElementById('annex').innerHTML = x;

document.getElementById('buttress').innerHTML = [[568, 485, 562], [634, 433, 543], [693, 413, 525], [748, 399, 510], [818, 379, 490], [864, 365, 478]]
  .map(([a, t, b]) => `<path d="M${a} ${t}h15v${b - t}h-15z" fill="#9a9a9a"/><path d="M${a - 2} ${b}l17-4v20l-17 3z" fill="#5f2c2c"/>`).join('');

// piles hang between the slab line and the toe line
const at = (pts, v) => { for (let i = 1; i < pts.length; i++) if (v <= pts[i][0]) { const [a, b] = pts[i - 1], [c, d] = pts[i]; return b + (d - b) * (v - a) / (c - a); } return pts[pts.length - 1][1]; };
const slabLine = [[837, 738], [919, 746], [1000, 750], [1100, 758], [1207, 770], [1310, 774], [1368, 760], [1503, 718]];
const toe = [[837, 808], [930, 818], [1000, 823], [1100, 831], [1205, 840], [1307, 844], [1340, 836], [1420, 812], [1503, 786]];
const pile = (v, w, cut, fill) => { const t = at(slabLine, v); return `<rect x="${v.toFixed(1)}" y="${t.toFixed(1)}" width="${w}" height="${(at(toe, v) - t - cut).toFixed(1)}" fill="${fill}"/>`; };
const browns = ['#4a2200', '#6a3300', '#8a4402', '#b05a06'];
let p = '';
for (let v = 920; v < 1330; v += 3) p += pile(v, 3, 18 + rand() * 26, browns[Math.floor(rand() * 3)]);
for (let v = 870; v < 1460; v += 5) if (v > 920 && v < 1340 || rand() > 0.5) p += pile(v + rand() * 2, 3, 10 + rand() * 24, browns[1 + Math.floor(rand() * 3)]);
p += poly([[925, 746], [1000, 750], [1100, 758], [1207, 770], [1310, 774], [1310, 820], [925, 795]], 'url(#dark)');
for (let v = 844; v < 1500; v += 6.6) p += pile(v + rand() * 1.5, 4, rand() * 9, 'url(#pile)');
document.getElementById('piles').innerHTML = p;
```
